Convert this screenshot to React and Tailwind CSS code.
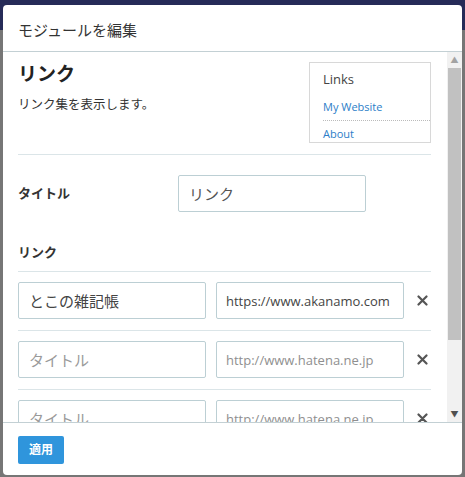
import React from "react";

const font = { fontFamily: '"Open Sans", "Noto Sans CJK JP", sans-serif' };

const LinkRow = ({ title, url, filled }) => (
  <div className="flex items-center border-t border-[#dbe5e8] pt-[10px] pb-[11px]">
    <input
      readOnly
      value={filled ? title : ""}
      placeholder="タイトル"
      className="w-[188px] h-[37px] border border-[#bccfd4] rounded-[2px] px-[10px] text-[15px] text-[#444] placeholder:text-[#9a9a9a] outline-none"
    />
    <input
      readOnly
      value={filled ? url : ""}
      placeholder="http://www.hatena.ne.jp"
      className="ml-[10px] w-[188px] h-[37px] border border-[#bccfd4] rounded-[2px] px-[9px] text-[13px] text-[#444] placeholder:text-[#8f8f8f] outline-none"
    />
    <svg className="ml-[13px]" width="11" height="11" viewBox="0 0 11 11">
      <path d="M1.5 1.5 L9.5 9.5 M9.5 1.5 L1.5 9.5" stroke="#555" strokeWidth="2.2" strokeLinecap="round" />
    </svg>
  </div>
);

export default function App() {
  return (
    <div
      style={font}
      className="w-[465px] h-[477px] overflow-hidden bg-[linear-gradient(#262b58_30px,#767676_30px)] pl-[3px] pr-[3px] pt-[5px]"
    >
      <div className="w-[459px] h-[470px] bg-white rounded-[4px] flex flex-col">
        <div className="h-[47px] shrink-0 border-b border-[#c3d0d4] flex items-center px-[15px]">
          <h1 className="text-[15px] text-[#333] pt-[4px]">モジュールを編集</h1>
        </div>

        <div className="flex flex-1 min-h-0">
          <div className="flex-1 overflow-hidden pl-[15px] pr-[16px]">
            <div className="flex justify-between pt-[10px] pb-[11px] border-b border-[#dbe5e8]">
              <div>
                <h2 className="text-[19px] font-bold text-[#222] leading-[24px]">リンク</h2>
                <p className="mt-[9px] text-[12.5px] text-[#333] leading-[20px]">リンク集を表示します。</p>
              </div>
              <div className="w-[122px] h-[81px] border border-[#d8d8d8] pl-[13px] text-[11px]">
                <div className="text-[13px] text-[#444] pt-[6px] leading-[20px]">Links</div>
                <div className="text-[#2c7ec8] pt-[11px] pb-[6px] border-b border-dotted border-[#bbb] leading-[14px]">My Website</div>
                <div className="text-[#2c7ec8] pt-[6px] leading-[14px]">About</div>
              </div>
            </div>

            <div className="flex items-center mt-[20px]">
              <label className="w-[160px] text-[13px] font-bold text-[#333]">タイトル</label>
              <input
                readOnly
                value="リンク"
                className="w-[188px] h-[37px] border border-[#bccfd4] rounded-[2px] px-[10px] text-[15px] text-[#555] outline-none"
              />
            </div>

            <div className="mt-[30px] mb-[9px] text-[13px] font-bold text-[#333] leading-[20px]">リンク</div>

            <LinkRow filled title="とこの雑記帳" url="https://www.akanamo.com" />
            <LinkRow />
            <LinkRow />
          </div>

          <div className="w-[15px] shrink-0 bg-[#f1f1f1] flex flex-col items-center">
            <div className="h-[16px] flex items-center justify-center text-[#a3a3a3] text-[8px]">▲</div>
            <div className="w-[13px] h-[272px] bg-[#c1c1c1]" />
            <div className="flex-1" />
            <div className="h-[16px] flex items-center justify-center text-[#505050] text-[8px]">▼</div>
          </div>
        </div>

        <div className="h-[53px] shrink-0 border-t border-[#c3d0d4] px-[15px] flex items-center">
          <button className="w-[46px] h-[28px] bg-[#2f95dc] rounded-[2px] text-white text-[12px] font-bold mt-[2px]">
            適用
          </button>
        </div>
      </div>
    </div>
  );
}
